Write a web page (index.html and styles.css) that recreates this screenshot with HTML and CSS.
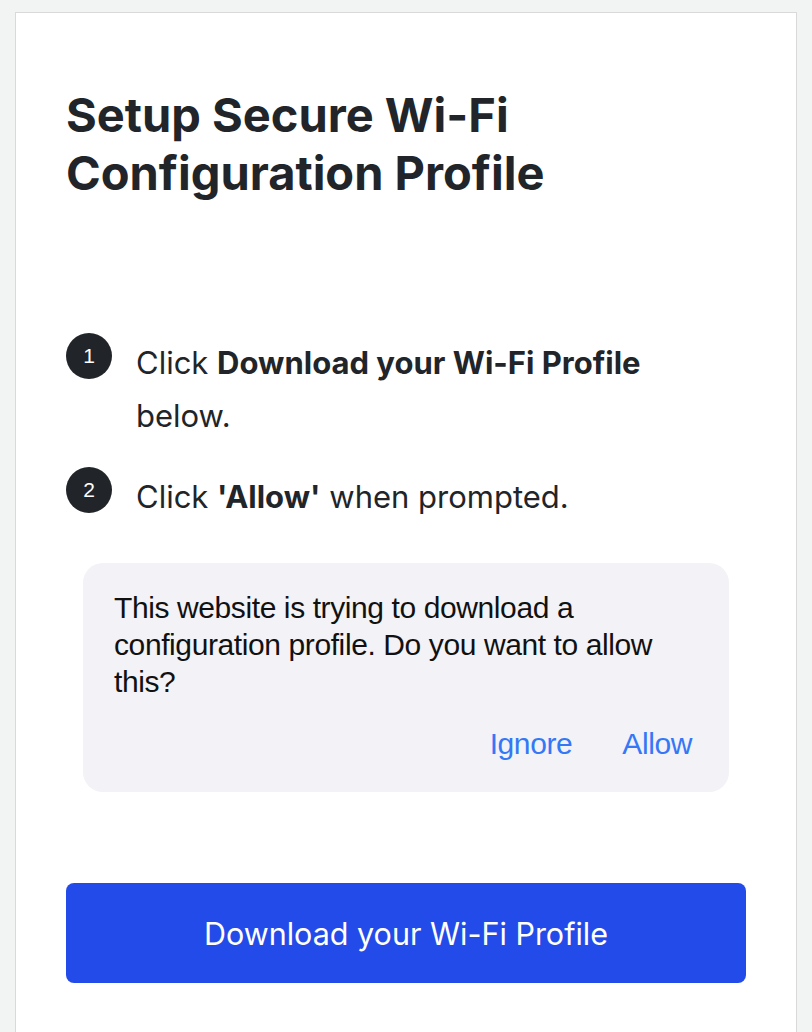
FILE: index.html
```html
<!DOCTYPE html>
<html lang="en">
<head>
<meta charset="utf-8">
<title>Setup Secure Wi-Fi Configuration Profile</title>
<link rel="stylesheet" href="styles.css">
</head>
<body>
<main class="card">
  <h1 class="title">Setup Secure Wi-Fi Configuration Profile</h1>
  <ol class="steps">
    <li class="step">
      <span class="num">1</span>
      <p class="step-text">Click <strong>Download your Wi-Fi Profile</strong> below.</p>
    </li>
    <li class="step">
      <span class="num">2</span>
      <p class="step-text">Click <strong>'Allow'</strong> when prompted.</p>
    </li>
  </ol>
  <div class="prompt">
    <p class="prompt-text">This website is trying to download a configuration profile. Do you want to allow this?</p>
    <div class="prompt-actions">
      <span class="prompt-btn">Ignore</span>
      <span class="prompt-btn">Allow</span>
    </div>
  </div>
  <button class="download" type="button">Download your Wi-Fi Profile</button>
</main>
</body>
</html>
```
FILE: styles.css
```css
html, body {
  margin: 0;
  padding: 0;
}
body {
  background: #f2f3f3;
  font-family: Inter, "Noto Sans", sans-serif;
  color: #212529;
}
.card {
  margin: 12px 15px 0;
  background: #fff;
  border: 1px solid #d9d9d9;
  padding: 73px 50px 60px;
  min-height: 1000px;
}
.title {
  margin: 0;
  font-size: 47px;
  font-weight: 700;
  line-height: 58px;
  color: #212529;
}
.steps {
  list-style: none;
  margin: 128px 0 0;
  padding: 0;
  display: flex;
  flex-direction: column;
  gap: 22px;
}
.step {
  display: flex;
  align-items: flex-start;
  gap: 24px;
}
.num {
  flex: none;
  width: 46px;
  height: 46px;
  margin-top: 3px;
  border-radius: 50%;
  background: #212529;
  color: #fff;
  font-family: "Liberation Sans", Arial, sans-serif;
  font-size: 21px;
  display: flex;
  align-items: center;
  justify-content: center;
}
.step-text {
  margin: 0;
  font-size: 31px;
  line-height: 53px;
  padding-top: 6px;
  padding-right: 40px;
}
.step-text strong {
  font-weight: 700;
}
.prompt {
  margin: 40px 17px 0;
  background: #f2f2f7;
  border-radius: 20px;
  padding: 26px 37px 30px 31px;
  font-family: "Liberation Sans", Arial, sans-serif;
  font-size: 30px;
  line-height: 37px;
  letter-spacing: -0.4px;
}
.prompt-text {
  margin: 0;
  color: #111;
}
.prompt-actions {
  margin-top: 25px;
  display: flex;
  justify-content: flex-end;
  gap: 50px;
}
.prompt-btn {
  color: #3478f6;
}
.download {
  display: block;
  width: 100%;
  margin-top: 91px;
  height: 100px;
  border: 0;
  border-radius: 8px;
  background: #234be9;
  color: #fff;
  font-family: Inter, "Noto Sans", sans-serif;
  font-size: 30.5px;
  cursor: pointer;
}
```
